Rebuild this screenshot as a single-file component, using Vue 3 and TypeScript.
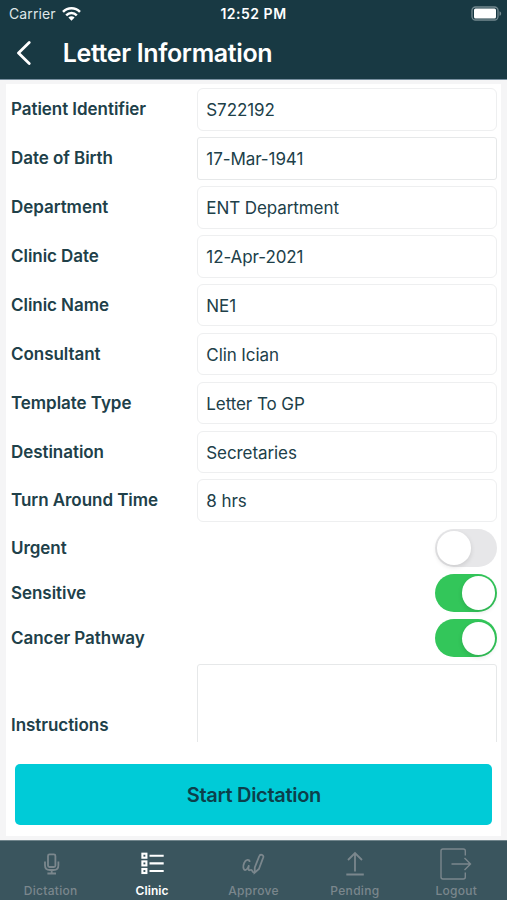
<script setup lang="ts">
import { ref } from 'vue'

interface Field {
  label: string
  value: string
  square?: boolean
}

interface Toggle {
  label: string
  on: boolean
}

const fields: Field[] = [
  { label: 'Patient Identifier', value: 'S722192' },
  { label: 'Date of Birth', value: '17-Mar-1941', square: true },
  { label: 'Department', value: 'ENT Department' },
  { label: 'Clinic Date', value: '12-Apr-2021' },
  { label: 'Clinic Name', value: 'NE1' },
  { label: 'Consultant', value: 'Clin Ician' },
  { label: 'Template Type', value: 'Letter To GP' },
  { label: 'Destination', value: 'Secretaries' },
  { label: 'Turn Around Time', value: '8 hrs' },
]

const toggles = ref<Toggle[]>([
  { label: 'Urgent', on: false },
  { label: 'Sensitive', on: true },
  { label: 'Cancer Pathway', on: true },
])

const tabs = ['Dictation', 'Clinic', 'Approve', 'Pending', 'Logout']
const activeTab = ref('Clinic')
</script>

<template>
  <div class="screen">
    <header class="header">
      <div class="status">
        <div class="carrier">
          <span>Carrier</span>
          <svg width="19" height="14" viewBox="0 0 19 14" fill="none" stroke="#fff" stroke-width="2.5">
            <path d="M1 4.900C5.800.1 13.200.1 18 4.900" />
            <path d="M4.200 8.300c3-3 7.600-3 10.600 0" />
            <path d="M9.500 13.800L6.400 10.600c1.800-1.700 4.400-1.700 6.200 0z" fill="#fff" stroke="none" />
          </svg>
        </div>
        <span class="time">12:52 PM</span>
        <svg class="battery" width="31" height="15" viewBox="0 0 31 15">
          <rect x="1" y="1" width="26" height="13" rx="3.500" fill="none" stroke="#738990" stroke-width="1.300" />
          <rect x="3" y="2.500" width="22" height="10" rx="1.500" fill="#fff" />
          <path d="M28.500 5.200c2.200.8 2.200 3.800 0 4.600z" fill="#738990" />
        </svg>
      </div>
      <div class="nav">
        <svg width="16" height="24" viewBox="0 0 16 24" fill="none" stroke="#fff" stroke-width="2.800" stroke-linecap="round" stroke-linejoin="round">
          <path d="M13.200 1.500L2.500 12l10.700 10.500" />
        </svg>
        <h1>Letter Information</h1>
      </div>
    </header>

    <main class="body">
      <div class="card">
        <div class="form">
          <div v-for="f in fields" :key="f.label" class="row">
            <span class="label">{{ f.label }}</span>
            <div class="field" :class="{ square: f.square }">{{ f.value }}</div>
          </div>
          <div class="switches">
            <div v-for="t in toggles" :key="t.label" class="switch-row">
              <span class="label">{{ t.label }}</span>
              <button class="switch" :class="{ on: t.on }" :aria-pressed="t.on" @click="t.on = !t.on">
                <span class="knob"></span>
              </button>
            </div>
          </div>
          <div class="notes-row">
            <span class="label">Instructions</span>
            <div class="notes"></div>
          </div>
        </div>
        <button class="start">Start Dictation</button>
      </div>
    </main>

    <nav class="tabs">
      <button v-for="tab in tabs" :key="tab" class="tab" :class="{ active: tab === activeTab }" @click="activeTab = tab">
        <svg v-if="tab === 'Dictation'" width="34" height="34" viewBox="0 0 34 34" class="icon">
          <rect x="14" y="7.400" width="7.400" height="12.600" rx="1.500" />
          <path d="M11 14.500v3.700q0 4.800 4.800 4.800h3.800q4.800 0 4.800-4.800v-3.700M17.700 23v3.200M13.400 26.500h8.600" />
        </svg>
        <svg v-else-if="tab === 'Clinic'" width="34" height="34" viewBox="0 0 34 34" class="icon">
          <g stroke-width="2.100">
            <rect x="7.400" y="6.700" width="4" height="4" />
            <rect x="7.400" y="14.400" width="4" height="4" />
            <rect x="7.400" y="22" width="4" height="4" />
            <path d="M14.500 8.700h14.200M14.500 16.400h14.200M14.500 24h14.200" />
          </g>
        </svg>
        <svg v-else-if="tab === 'Approve'" width="34" height="34" viewBox="0 0 34 34" class="icon">
          <path d="M13.600 15c.1-3.200-3.900-2.600-5.400.8-1.500 3.400-1 7.200 1 7.200 1.900 0 3-2.800 3.800-4.700-.8 2.700-.9 5.200.6 4.900 1-.2 1.600-.8 2.200 0 .6.900.8 2.100 2.300 2.500" />
          <path d="M18.600 25.700l.2-5.200 4.500-11.500c.8-2.200 4.700-1.300 4 1.200l-4.400 11.800z" />
        </svg>
        <svg v-else-if="tab === 'Pending'" width="34" height="34" viewBox="0 0 34 34" class="icon">
          <path d="M17 24.500V6.500M10 13l7-7 7 7M8.300 27.500h17.500" />
        </svg>
        <svg v-else width="34" height="34" viewBox="0 0 34 34" class="icon thin">
          <path d="M26.300 8.500V4q0-2-2-2H4Q2 2 2 4v26q0 2 2 2h20.300q2 0 2-2v-4.500M12.500 17h19M25.500 11l6 6-6 6" />
        </svg>
        <span>{{ tab }}</span>
      </button>
    </nav>
  </div>
</template>

<style>
body {
  margin: 0;
}
</style>

<style scoped>
.screen {
  width: 507px;
  height: 900px;
  display: flex;
  flex-direction: column;
  overflow: hidden;
  background: #f5f5f6;
  color: #204049;
  font-family: Inter, Roboto, sans-serif;
}
button {
  border: 0;
  padding: 0;
  margin: 0;
  font: inherit;
  color: inherit;
}
svg {
  display: block;
}
.header {
  box-sizing: border-box;
  height: 80px;
  flex: none;
  background: #183943;
  border-bottom: 1px solid #7890a0;
  color: #fff;
}
.status {
  height: 27px;
  display: grid;
  grid-template-columns: 1fr auto 1fr;
  align-items: center;
  padding: 0 9px;
  font-size: 14px;
}
.carrier {
  display: flex;
  align-items: center;
  gap: 6px;
  color: #dfe6e8;
  letter-spacing: 0.1px;
}
.time {
  font-weight: 600;
  font-size: 14px;
  letter-spacing: 0.5px;
}
.battery {
  justify-self: end;
  margin-right: -4px;
}
.nav {
  display: flex;
  align-items: center;
  gap: 31px;
  height: 51px;
  padding-left: 15.700px;
}
h1 {
  margin: 0;
  font-size: 25px;
  line-height: 30px;
  font-weight: 600;
  letter-spacing: -0.360px;
}
.body {
  flex: 1;
  padding: 4px 6px;
  min-height: 0;
}
.card {
  box-sizing: border-box;
  height: 752px;
  background: #fff;
  overflow: hidden;
}
.form {
  height: 658px;
  overflow: hidden;
  padding: 0 4px 0 5px;
}
.row {
  display: grid;
  grid-template-columns: 186px 1fr;
  height: 48.880px;
  padding-top: 4.400px;
  box-sizing: border-box;
}
.label {
  font-size: 17px;
  font-weight: 600;
  line-height: 42px;
  white-space: nowrap;
  letter-spacing: -0.050px;
}
.field {
  box-sizing: border-box;
  height: 42.500px;
  border: 1.500px solid #eeeff0;
  border-radius: 6px;
  padding-left: 8.300px;
  line-height: 42.500px;
  font-size: 17px;
  letter-spacing: -0.080px;
}
.field.square {
  border-color: #e6e8e9;
  border-radius: 3px;
}
.switches {
  display: grid;
  gap: 7.200px;
  padding-top: 5px;
}
.switch-row {
  display: flex;
  align-items: center;
  justify-content: space-between;
  height: 38px;
}
.switch {
  box-sizing: border-box;
  width: 62px;
  height: 38px;
  border-radius: 19px;
  padding: 2px;
  background: #e7e7e9;
  display: flex;
  align-items: center;
}
.switch.on {
  background: #33c65a;
  justify-content: flex-end;
}
.knob {
  width: 33.500px;
  height: 33.500px;
  border-radius: 50%;
  background: #fff;
  box-shadow: 0 2px 5px rgba(0, 0, 0, 0.12);
}
.notes-row {
  display: grid;
  grid-template-columns: 186px 1fr;
  align-items: center;
  height: 121px;
  margin-top: 7px;
}
.notes {
  box-sizing: border-box;
  height: 121px;
  border: 1.500px solid #e6e8e9;
  border-radius: 3px;
}
.start {
  display: block;
  width: 477px;
  height: 61px;
  margin: 22.400px 0 0 9.400px;
  border-radius: 5px;
  background: #00cbd7;
  color: #0c3f4b;
  font-size: 20px;
  font-weight: 600;
  letter-spacing: -0.300px;
}
.tabs {
  flex: none;
  box-sizing: border-box;
  height: 60px;
  display: grid;
  grid-template-columns: repeat(5, 1fr);
  background: #3a555e;
  border-top: 1px solid #71858c;
}
.tab {
  display: flex;
  flex-direction: column;
  align-items: center;
  padding-top: 6px;
  background: none;
  color: #7b878d;
  font-size: 12px;
  line-height: 16px;
  font-weight: 500;
  letter-spacing: 0.300px;
  gap: 2px;
}
.tab.active {
  color: #fff;
  font-weight: 600;
  letter-spacing: 0.100px;
}
.icon {
  fill: none;
  stroke: currentColor;
  stroke-width: 1.800;
}
.icon.thin {
  stroke-width: 1.400;
}
</style>
